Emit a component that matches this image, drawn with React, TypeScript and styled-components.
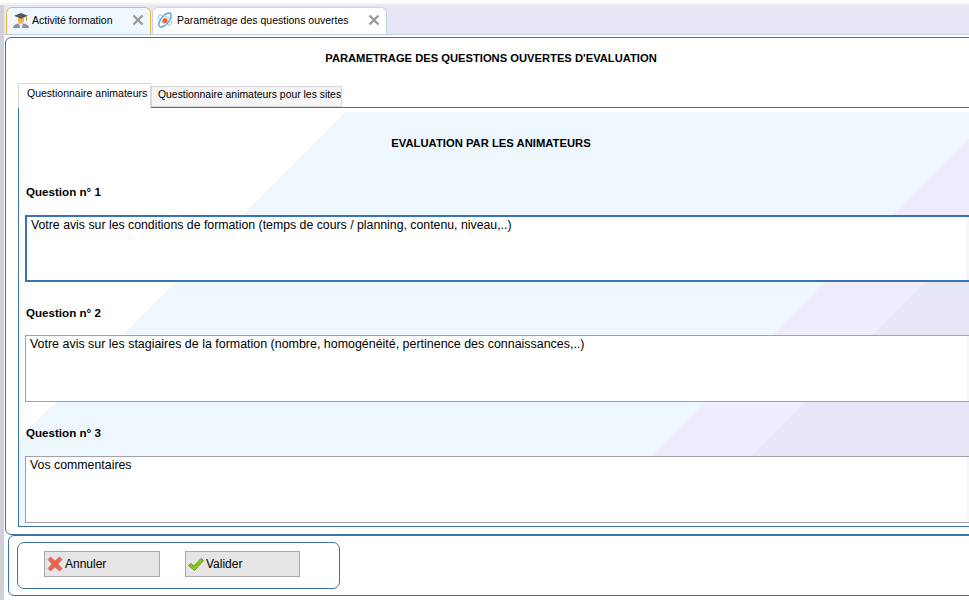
import styled, { createGlobalStyle } from "styled-components";

const GlobalStyle = createGlobalStyle`
  html, body {
    margin: 0;
    padding: 0;
    background: #ffffff;
    overflow: hidden;
  }
`;

const BLUE = "#3a73ad";

const Page = styled.div`
  width: 969px;
  height: 600px;
  overflow: hidden;
  display: flex;
  flex-direction: column;
  font-family: "Liberation Sans", Arial, sans-serif;
  font-size: 12px;
  color: #000;
`;

const TopEdge = styled.div`
  height: 2px;
  margin-top: 3px;
  background: #f1f1f3;
  flex: none;
`;

const Body = styled.div`
  flex: 1;
  display: flex;
  min-height: 0;
`;

const LeftStrip = styled.div`
  width: 4px;
  background: #cfd0da;
  flex: none;
`;

const Main = styled.div`
  width: 1010px;
  flex: none;
  display: flex;
  flex-direction: column;
`;

const TabBar = styled.div`
  height: 30px;
  box-sizing: border-box;
  padding: 2px 0 0 2px;
  display: flex;
  gap: 1px;
  background: #e7e6f6;
  border-bottom: 1px solid #bccde4;
`;

const DocTab = styled.div<{ $active?: boolean; $width: number }>`
  width: ${(p) => p.$width}px;
  box-sizing: border-box;
  display: flex;
  align-items: center;
  gap: ${(p) => (p.$active ? 4 : 2)}px;
  padding: 0 6px 2px ${(p) => (p.$active ? 4 : 5)}px;
  font-size: 10.5px;
  border: 1px solid ${(p) => (p.$active ? "#c8d3e6" : "#f4b93a")};
  border-bottom: none;
  border-radius: 6px 6px 0 0;
  background: ${(p) => (p.$active ? "#ffffff" : "#eef6fe")};
`;

const DocTitle = styled.span`
  flex: 1;
  white-space: nowrap;
`;

const Panel = styled.div`
  margin: 2px 0 0 1px;
  width: 1000px;
  height: 498px;
  box-sizing: border-box;
  border: 1px solid ${BLUE};
  border-radius: 6px 0 0 6px;
  background: #fff;
`;

const Title = styled.div`
  width: 970px;
  padding-top: 13px;
  height: 14px;
  line-height: 14px;
  text-align: center;
  font-size: 11.2px;
  font-weight: bold;
`;

const InnerTabs = styled.div`
  margin: 18px 0 0 12px;
  height: 24px;
  display: flex;
  align-items: flex-end;
`;

const InnerTab = styled.div<{ $active?: boolean }>`
  box-sizing: border-box;
  position: relative;
  z-index: ${(p) => (p.$active ? 1 : 0)};
  height: ${(p) => (p.$active ? 25 : 21)}px;
  margin-bottom: ${(p) => (p.$active ? -1 : 0)}px;
  width: ${(p) => (p.$active ? 133 : 191)}px;
  padding: ${(p) => (p.$active ? "2px 0 0 8px" : "1px 0 0 6px")};
  font-size: ${(p) => (p.$active ? 10.5 : 10.4)}px;
  line-height: 14px;
  white-space: nowrap;
  background: ${(p) => (p.$active ? "#fff" : "#f4f4f4")};
  border: 1px solid #d9d9d9;
  border-bottom: ${(p) => (p.$active ? "none" : "1px solid #d9d9d9")};
`;

const TabPage = styled.div`
  margin-left: 12px;
  box-sizing: border-box;
  height: 420px;
  padding: 4px 0 3px;
  border: 1px solid ${BLUE};
  border-right: none;
`;

const Content = styled.div`
  height: 100%;
  padding-top: 24px;
  box-sizing: border-box;
  background: linear-gradient(
    135deg,
    #ffffff 231px,
    #eef6fe 231px,
    #eef6fe 690.5px,
    #efedfd 690.5px,
    #efedfd 761px,
    #e7e6f6 761px
  );
`;

const Heading = styled.div`
  width: 944px;
  height: 14px;
  line-height: 14px;
  text-align: center;
  font-size: 11.25px;
  font-weight: bold;
`;

const Question = styled.div<{ $first?: boolean }>`
  margin-top: ${(p) => (p.$first ? 35 : 24)}px;
  padding-left: 6px;
`;

const QuestionLabel = styled.div<{ $gap: number }>`
  height: 14px;
  line-height: 14px;
  padding-left: 1px;
  margin-bottom: ${(p) => p.$gap}px;
  font-size: 11.6px;
  font-weight: bold;
`;

const AnswerBox = styled.div<{ $focused?: boolean }>`
  width: 960px;
  height: 67px;
  box-sizing: border-box;
  display: flex;
  background: #fff;
  border: ${(p) => (p.$focused ? `2px solid ${BLUE}` : "1px solid #a0a0a8")};
`;

const AnswerText = styled.div<{ $size: number }>`
  flex: 1;
  padding: 1px 0 0 4px;
  font-size: ${(p) => p.$size}px;
  line-height: 14px;
  white-space: nowrap;
`;

const ScrollTrack = styled.div`
  width: 17px;
  flex: none;
  background: #f5f5f7;
`;

const Footer = styled.div`
  margin-left: 4px;
  width: 1000px;
  height: 61px;
  box-sizing: border-box;
  padding: 6px 0 0 8px;
  border: 1px solid ${BLUE};
  border-radius: 6px 0 0 6px;
  background: #fff;
`;

const ButtonGroup = styled.div`
  width: 323px;
  height: 47px;
  box-sizing: border-box;
  padding: 8px 0 0 26px;
  display: flex;
  gap: 25px;
  border: 1px solid ${BLUE};
  border-radius: 7px;
`;

const ActionButton = styled.div<{ $width: number }>`
  width: ${(p) => p.$width}px;
  height: 26px;
  box-sizing: border-box;
  display: flex;
  align-items: center;
  gap: 2px;
  padding-left: 2px;
  background: #e5e5e5;
  border: 1px solid #a9a9a9;
`;

const CloseIcon = () => (
  <svg width="12" height="12" viewBox="0 0 12 12" fill="none">
    <path d="M1.500 1.500l9 9M10.500 1.500l-9 9" stroke="#9a9a9a" strokeWidth="2.400" />
  </svg>
);

const GraduateIcon = () => (
  <svg width="18" height="17" viewBox="0 0 18 17">
    <path d="M1 16c0-3 2.500-4.500 8-4.500S17 13 17 16z" fill="#8a949c" />
    <path d="M7 11.500h4L10 16H8z" fill="#e8eef6" />
    <path d="M6 6h6v2.500c0 2-1.300 3-3 3s-3-1-3-3z" fill="#f2b04a" />
    <path d="M2 3.800L9 1l7 2.800-7 3z" fill="#55595e" />
    <path d="M14.500 4.500v4" stroke="#c98a2b" strokeWidth="1" />
  </svg>
);

const AtomIcon = () => (
  <svg width="16" height="18" viewBox="0 0 16 18" fill="none">
    <ellipse cx="8" cy="9" rx="8.500" ry="4" stroke="#4a9be0" strokeWidth="1.300" transform="rotate(-50 8 9)" />
    <ellipse cx="8" cy="9" rx="7.500" ry="3.600" stroke="#9fd0f2" strokeWidth="1.100" transform="rotate(30 8 9)" />
    <circle cx="8" cy="9.500" r="2.600" fill="#f0642a" />
  </svg>
);

const CancelIcon = () => (
  <svg width="16" height="16" viewBox="0 0 16 16">
    <path
      d="M3.500 1L8 5l4.500-4L15 3.500 11 8l4 4.500-2.500 2.500L8 11l-4.500 4L1 12.500 5 8 1 3.500z"
      fill="#f0604e"
      stroke="#c9857a"
      strokeWidth="1"
      strokeLinejoin="round"
    />
  </svg>
);

const ConfirmIcon = () => (
  <svg width="16" height="16" viewBox="0 0 16 16">
    <path
      d="M0.500 9.500L3 7.500 6 10 13 2.500 15.500 4.500 6.500 14.500z"
      fill="#8fc31f"
      stroke="#6e9a22"
      strokeWidth="1"
      strokeLinejoin="round"
    />
  </svg>
);

const questions = [
  {
    label: "Question n° 1",
    gap: 16,
    size: 12.3,
    text: "Votre avis sur les conditions de formation (temps de cours / planning, contenu, niveau,..)",
    focused: true,
  },
  {
    label: "Question n° 2",
    gap: 15,
    size: 12.45,
    text: "Votre avis sur les stagiaires de la formation (nombre, homogénéité, pertinence des connaissances,..)",
  },
  {
    label: "Question n° 3",
    gap: 16,
    size: 12.35,
    text: "Vos commentaires",
  },
];

export default function App() {
  return (
    <Page>
      <GlobalStyle />
      <TopEdge />
      <Body>
        <LeftStrip />
        <Main>
          <TabBar>
            <DocTab $width={145}>
              <GraduateIcon />
              <DocTitle>Activité formation</DocTitle>
              <CloseIcon />
            </DocTab>
            <DocTab $active $width={235}>
              <AtomIcon />
              <DocTitle>Paramétrage des questions ouvertes</DocTitle>
              <CloseIcon />
            </DocTab>
          </TabBar>
          <Panel>
            <Title>PARAMETRAGE DES QUESTIONS OUVERTES D'EVALUATION</Title>
            <InnerTabs>
              <InnerTab $active>Questionnaire animateurs</InnerTab>
              <InnerTab>Questionnaire animateurs pour les sites</InnerTab>
            </InnerTabs>
            <TabPage>
              <Content>
                <Heading>EVALUATION PAR LES ANIMATEURS</Heading>
                {questions.map((q, i) => (
                  <Question key={q.label} $first={i === 0}>
                    <QuestionLabel $gap={q.gap}>{q.label}</QuestionLabel>
                    <AnswerBox $focused={q.focused}>
                      <AnswerText $size={q.size}>{q.text}</AnswerText>
                      <ScrollTrack />
                    </AnswerBox>
                  </Question>
                ))}
              </Content>
            </TabPage>
          </Panel>
          <Footer>
            <ButtonGroup>
              <ActionButton $width={116}>
                <CancelIcon />
                Annuler
              </ActionButton>
              <ActionButton $width={115}>
                <ConfirmIcon />
                Valider
              </ActionButton>
            </ButtonGroup>
          </Footer>
        </Main>
      </Body>
    </Page>
  );
}
